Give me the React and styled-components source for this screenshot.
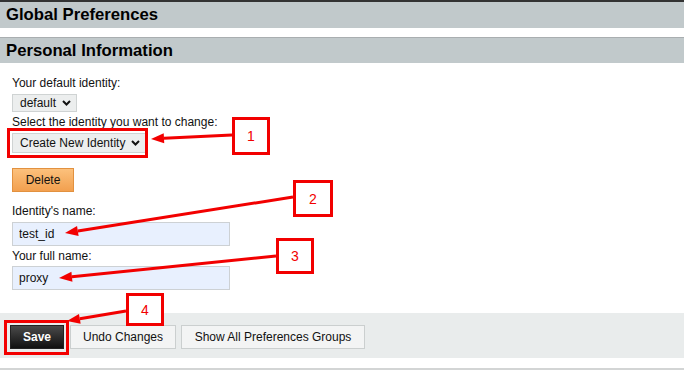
import React from 'react';
import styled, { createGlobalStyle } from 'styled-components';

const GlobalStyle = createGlobalStyle`
  body {
    margin: 0;
    background: #ffffff;
    font-family: 'Liberation Sans', Arial, sans-serif;
    color: #111;
  }
`;

const Page = styled.div`
  position: relative;
  width: 684px;
  height: 372px;
  overflow: hidden;
`;

const TopRule = styled.div`
  height: 2px;
  background: #333;
`;

const SectionHeader = styled.div`
  background: #c1c9cb;
  height: ${p => p.$h}px;
  line-height: ${p => p.$h}px;
  padding-left: 6px;
  font-size: 16.7px;
  font-weight: bold;
  color: #000;
  border-top: ${p => (p.$bordered ? '1px solid #a9aeb0' : 'none')};
  margin-top: ${p => p.$mt || 0}px;
`;

const Form = styled.div`
  display: flex;
  flex-direction: column;
  align-items: flex-start;
  padding: 13px 0 0 12px;
`;

const Label = styled.div`
  font-size: 12px;
  line-height: 14px;
  color: #111;
  margin-top: ${p => p.$mt || 0}px;
`;

const SelectBox = styled.div`
  display: flex;
  align-items: center;
  gap: 6px;
  box-sizing: border-box;
  height: ${p => p.$h}px;
  margin-top: 4px;
  padding: 0 5px 0 7px;
  background: #eceeee;
  border: 1px solid #cfd3d3;
  font-size: 12px;
  color: #111;
`;

const Chevron = () => (
  <svg width="9" height="6" viewBox="0 0 9 6">
    <path d="M1 1 L4.5 4.5 L8 1" fill="none" stroke="#111" strokeWidth="2" />
  </svg>
);

const DeleteButton = styled.button`
  margin-top: 15px;
  width: 62px;
  height: 24px;
  font-family: inherit;
  font-size: 12px;
  color: #111;
  border: 1px solid #e2913f;
  background: linear-gradient(#fcc17c, #f2a04f);
  padding: 0;
`;

const TextInput = styled.input`
  box-sizing: border-box;
  width: 218px;
  height: 24px;
  margin-top: ${p => p.$mt}px;
  padding: 0 6px;
  border: 1px solid #cdd1d4;
  background: #e8f0fe;
  font-family: inherit;
  font-size: 12px;
  color: #111;
  outline: none;
`;

const Footer = styled.div`
  display: flex;
  gap: 5px;
  margin-top: 23px;
  height: 45px;
  box-sizing: border-box;
  padding: 12px 0 0 10px;
  background: #e9ecec;
`;

const Button = styled.button`
  height: 24px;
  width: ${p => p.$w}px;
  padding: 0;
  font-family: inherit;
  font-size: 12px;
  color: #111;
  background: #f3f4f4;
  border: 1px solid #cbcfcf;
`;

const SaveButton = styled(Button)`
  color: #fff;
  font-weight: bold;
  background: linear-gradient(#4a4a4a, #111);
  border: 1px solid #222;
  margin-right: 1px;
`;

const BottomRule = styled.div`
  margin-top: 10px;
  height: 2px;
  background: #d3d5d5;
`;

const Overlay = styled.svg`
  position: absolute;
  left: 0;
  top: 0;
  pointer-events: none;
`;

const RED = '#f20000';

const arrows = [
  { x1: 232, y1: 135, x2: 151, y2: 139 },
  { x1: 293, y1: 197, x2: 65, y2: 233 },
  { x1: 276, y1: 256, x2: 59, y2: 278 },
  { x1: 126, y1: 311, x2: 67, y2: 321 },
];

const boxes = [
  { x: 233.5, y: 118.5, w: 35, h: 35, n: '1' },
  { x: 294.5, y: 181.5, w: 37, h: 34, n: '2' },
  { x: 277.5, y: 239.5, w: 35, h: 33, n: '3' },
  { x: 127.5, y: 294.5, w: 35, h: 30, n: '4' },
];

function Arrow({ x1, y1, x2, y2 }) {
  const ang = Math.atan2(y2 - y1, x2 - x1);
  const len = 13;
  const half = 5;
  const bx = x2 - len * Math.cos(ang);
  const by = y2 - len * Math.sin(ang);
  const px = -Math.sin(ang) * half;
  const py = Math.cos(ang) * half;
  return (
    <g>
      <line x1={x1} y1={y1} x2={bx} y2={by} stroke={RED} strokeWidth="3" />
      <polygon
        points={`${x2},${y2} ${bx + px},${by + py} ${bx - px},${by - py}`}
        fill={RED}
      />
    </g>
  );
}

function Annotations() {
  return (
    <Overlay width="684" height="372">
      <rect x="8.5" y="129.5" width="138" height="27" fill="none" stroke={RED} strokeWidth="3" />
      <rect x="5.5" y="321.5" width="62" height="32" fill="none" stroke={RED} strokeWidth="3" />
      {arrows.map((a, i) => <Arrow key={i} {...a} />)}
      {boxes.map(b => (
        <g key={b.n}>
          <rect x={b.x} y={b.y} width={b.w} height={b.h} fill="#fff" stroke={RED} strokeWidth="3" />
          <text
            x={b.x + b.w / 2}
            y={b.y + b.h / 2 + 5}
            textAnchor="middle"
            fontSize="14"
            fontFamily="'Liberation Sans', Arial, sans-serif"
            fill={RED}
          >
            {b.n}
          </text>
        </g>
      ))}
    </Overlay>
  );
}

export default function App() {
  return (
    <Page>
      <GlobalStyle />
      <TopRule />
      <SectionHeader $h={26}>Global Preferences</SectionHeader>
      <SectionHeader $h={25} $bordered $mt={9}>Personal Information</SectionHeader>
      <Form>
        <Label>Your default identity:</Label>
        <SelectBox $h={18}>default <Chevron /></SelectBox>
        <Label $mt={3}>Select the identity you want to change:</Label>
        <SelectBox $h={20}>Create New Identity <Chevron /></SelectBox>
        <DeleteButton>Delete</DeleteButton>
        <Label $mt={12}>Identity's name:</Label>
        <TextInput $mt={4} defaultValue="test_id" />
        <Label $mt={3}>Your full name:</Label>
        <TextInput $mt={3} defaultValue="proxy" />
      </Form>
      <Footer>
        <SaveButton $w={54}>Save</SaveButton>
        <Button $w={106}>Undo Changes</Button>
        <Button $w={184}>Show All Preferences Groups</Button>
      </Footer>
      <BottomRule />
      <Annotations />
    </Page>
  );
}
